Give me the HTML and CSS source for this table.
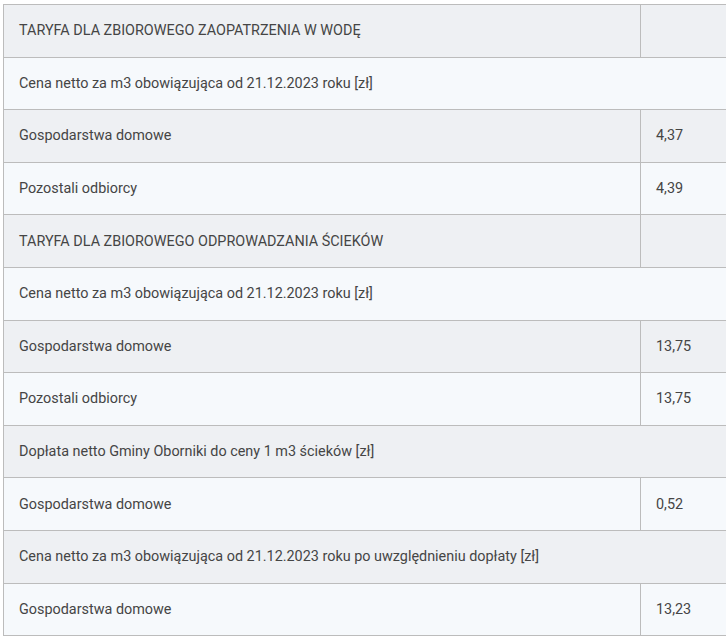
FILE: index.html
```html
<!DOCTYPE html>
<html lang="pl">
<head>
  <meta charset="UTF-8">
  <title>Taryfy</title>
  <link rel="stylesheet" href="styles.css">
</head>
<body>
  <table class="tariff">
    <tr>
      <td class="name">TARYFA DLA ZBIOROWEGO ZAOPATRZENIA W WODĘ</td>
      <td class="value"></td>
    </tr>
    <tr>
      <td colspan="2">Cena netto za m3 obowiązująca od 21.12.2023 roku [zł]</td>
    </tr>
    <tr>
      <td class="name">Gospodarstwa domowe</td>
      <td class="value">4,37</td>
    </tr>
    <tr>
      <td class="name">Pozostali odbiorcy</td>
      <td class="value">4,39</td>
    </tr>
    <tr>
      <td class="name">TARYFA DLA ZBIOROWEGO ODPROWADZANIA ŚCIEKÓW</td>
      <td class="value"></td>
    </tr>
    <tr>
      <td colspan="2">Cena netto za m3 obowiązująca od 21.12.2023 roku [zł]</td>
    </tr>
    <tr>
      <td class="name">Gospodarstwa domowe</td>
      <td class="value">13,75</td>
    </tr>
    <tr>
      <td class="name">Pozostali odbiorcy</td>
      <td class="value">13,75</td>
    </tr>
    <tr>
      <td colspan="2">Dopłata netto Gminy Oborniki do ceny 1 m3 ścieków [zł]</td>
    </tr>
    <tr>
      <td class="name">Gospodarstwa domowe</td>
      <td class="value">0,52</td>
    </tr>
    <tr>
      <td colspan="2">Cena netto za m3 obowiązująca od 21.12.2023 roku po uwzględnieniu dopłaty [zł]</td>
    </tr>
    <tr>
      <td class="name">Gospodarstwa domowe</td>
      <td class="value">13,23</td>
    </tr>
  </table>
</body>
</html>
```

FILE: styles.css
```css
body {
  margin: 0;
  padding: 4px 0 0 3px;
  background: #fff;
  font-family: Roboto, "Liberation Sans", sans-serif;
}
.tariff {
  border-collapse: collapse;
  width: 723px;
  font-size: 14.4px;
  color: #454545;
}
.tariff td {
  border: 1px solid #bcbcbc;
  padding: 0 15px;
  height: 52.6px;
  box-sizing: border-box;
  text-align: left;
  vertical-align: middle;
}
.tariff td:last-child {
  border-right: none;
}
.tariff tr:nth-child(odd) td {
  background-color: #eef0f3;
}
.tariff tr:nth-child(even) td {
  background-color: #f6f9fc;
}
.tariff .name {
  width: 637px;
}
```
